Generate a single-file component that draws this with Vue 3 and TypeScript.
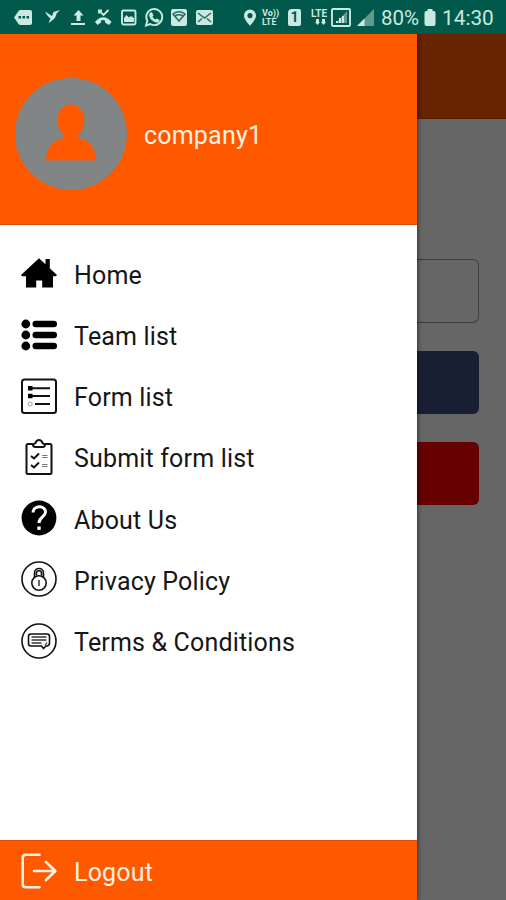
<script setup lang="ts">
type IconName = 'home' | 'team' | 'form' | 'submit' | 'about' | 'privacy' | 'terms'

interface MenuItem {
  icon: IconName
  label: string
}

const items: MenuItem[] = [
  { icon: 'home', label: 'Home' },
  { icon: 'team', label: 'Team list' },
  { icon: 'form', label: 'Form list' },
  { icon: 'submit', label: 'Submit form list' },
  { icon: 'about', label: 'About Us' },
  { icon: 'privacy', label: 'Privacy Policy' },
  { icon: 'terms', label: 'Terms & Conditions' },
]
</script>

<template>
  <div class="screen">
    <header class="status">
      <div class="notifications">
        <svg viewBox="10 0 26 34"><path class="fill" d="M14 17.5l4.500-6.500q.7-1 2-1H30q2 0 2 2v11q0 2-2 2h-9.500q-1.300 0-2-1z" /><path class="dark" d="M18.500 16h2.500v2.500h-2.500zM22.500 16h2.500v2.500h-2.500zM26.500 16h2.500v2.500h-2.500z" /></svg>
        <svg viewBox="36 0 26 34"><path class="fill" d="M45 11.500l7 4.500 1.500-4 6.500-2-3.500 3.500c-.5 4-3 6.500-8 9.500l2-4.500c-2-1.500-4-3.500-5.500-7z" /></svg>
        <svg viewBox="62 0 26 34"><path class="fill" d="M78.500 10l5 5.500h-3V21h-4v-5.500h-3zM71 23h14v2H71z" /></svg>
        <svg viewBox="88 0 26 34"><path class="line" d="M99 10.500l4.500 4.500 5-5" /><path class="line" d="M99 13.500v-3h3" /><path class="fill" d="M95 22c4.500-6.500 12-6.500 16.500 0l-2.500 3-4-2.500v-2q-2-.8-4 0v2L97.500 25z" /></svg>
        <svg viewBox="114 0 26 34"><rect class="line" x="122" y="10.500" width="13.500" height="14" rx="1.500" /><path class="fill" d="M124 22v-4l2.500-3 2.500 2.500 2-1.500 3 2v4z" /></svg>
        <svg viewBox="140 0 26 34"><path class="line" d="M146 25.500l1.300-4.500a8 8 0 1 1 3 3z" /><path class="fill" d="M150.300 12.500l1.700-.2 1.500 3-1 1.500q1 2 3 2.800l1.300-1.200 2.700 1.500q.2 2.300-2.500 2.600c-4.500-.3-8.500-5-7.800-8.500z" /></svg>
        <svg viewBox="166 0 26 34"><rect class="fill" x="171" y="9" width="16" height="17" rx="2" /><path class="darkline" d="M173 14q6-4.500 12 0l-6 7zM175 16q4-2.500 8 0" /></svg>
        <svg viewBox="192 0 26 34"><rect class="fill" x="196" y="10" width="17" height="15" rx="2" /><path class="darkline" d="M198 13l6.500 5 6.500-5M198 22l4-3.500M211 22l-4-3.500" /></svg>
      </div>
      <div class="system">
        <svg class="pin" viewBox="240 0 20 34"><path class="fill" fill-rule="evenodd" d="M250 9.500a6 6 0 0 1 6 6c0 4-4 7.500-6 10.500-2-3-6-6.500-6-10.500a6 6 0 0 1 6-6zm0 3.500a2.600 2.600 0 1 0 .01 0z" /></svg>
        <span class="volte"><span>Vo))</span><span>LTE</span></span>
        <span class="sim">1</span>
        <span class="lte"><span>LTE</span><svg viewBox="0 0 18 7"><path class="fill" d="M5 0h3v3H9L6.500 6 4 3h1zM11 0h3v3h1l-2.500 3L10 3h1z" /></svg></span>
        <svg class="boxed" viewBox="330 0 22 34"><rect class="line" x="332" y="9" width="18" height="17" rx="1" /><path class="faint" d="M336 23L347 11V23z" /><path class="fill" d="M336 23v-2h2v2zM339 23v-5h2v5zM342 23v-7h2v7z" /></svg>
        <svg class="signal" viewBox="354 0 23 34"><path class="faint" d="M357 26L374 9V26z" /><path class="fill" d="M357 26l7.500-7.500V26z" /></svg>
        <span class="percent">80%</span>
        <svg class="battery" viewBox="422 0 16 34"><path class="fill" d="M424.500 13q0-2 2-2h1V9h5v2h1.500q1.500 0 1.500 2v11q0 2-1.500 2h-7.500q-2 0-2-2z" /></svg>
        <time class="clock">14:30</time>
      </div>
    </header>

    <div class="body">
      <aside class="drawer">
        <div class="profile">
          <svg class="avatar" viewBox="0 0 112 112"><circle cx="56" cy="56" r="56" fill="#818585" /><path fill="#ff5900" d="M56 26.500c8 0 13.500 6.500 13.500 15.500 0 6.500-2.500 11.500-6 14.500v3.500c10 3 16.500 6.500 17.500 22.500H31c1-16 7.500-19.500 17.500-22.500v-3.500c-3.500-3-6-8-6-14.500 0-9 5.500-15.500 13.500-15.500z" /></svg>
          <span class="name">company1</span>
        </div>

        <nav class="menu">
          <a v-for="item in items" :key="item.icon" class="row">
            <svg v-if="item.icon === 'home'" class="icon" viewBox="0 0 36 36"><path d="M18 3.300l6.500 6V4h4.300v9.300L36 20l-1.200 1.200H32V32.500H21.200v-7h-6v7H5V21.200H1.200L0 20z" /></svg>
            <svg v-else-if="item.icon === 'team'" class="icon" viewBox="0 0 36 36"><circle cx="4.800" cy="7" r="4.400" /><circle cx="4.800" cy="18" r="4.400" /><circle cx="4.800" cy="29" r="4.400" /><rect x="11.500" y="3.700" width="24.500" height="6.600" rx="3.300" /><rect x="11.500" y="14.700" width="24.500" height="6.600" rx="3.300" /><rect x="11.500" y="25.700" width="24.500" height="6.600" rx="3.300" /></svg>
            <svg v-else-if="item.icon === 'form'" class="icon" viewBox="0 0 36 36"><rect class="ink" x="1" y="1.500" width="34" height="33.500" rx="2.500" /><path d="M7 8h4.500v4.500H7zM7 15.700h4.500v4.500H7z" /><circle cx="9.200" cy="26" r="2" fill="none" stroke="#999" /><path class="ink" d="M11 10.300h18M11 18h18M14 26h15" /></svg>
            <svg v-else-if="item.icon === 'submit'" class="icon" viewBox="0 0 36 36"><path class="ink" d="M12 5H7Q5.500 5 5.500 6.500v27q0 1.500 1.500 1.500h22q1.500 0 1.500-1.500v-27Q30.500 5 29 5h-5" /><path class="ink" d="M12 5.500l2.500-1.500q1-3 3.500-3t3.500 3L24 5.500q0 2.500-2.500 2.500h-7Q12 8 12 5.500z" /><path class="ink" d="M10 17l3 2.500 5-5M10 26l3 2.500 5-5" /><path fill="none" stroke="#777" stroke-width="1.200" d="M21 16.500h5.500M21 18.500h5.500M21 25.500h5.500M21 27.500h5.500" /></svg>
            <svg v-else-if="item.icon === 'about'" class="icon" viewBox="0 0 36 36"><circle cx="18" cy="18" r="17.400" /><path fill="none" stroke="#fff" stroke-width="3" d="M12 12.500c.5-7.500 12.500-7.500 12.500-.5 0 5-6.500 5-6.500 11" /><rect x="16.300" y="26.500" width="3.400" height="3.400" fill="#fff" /></svg>
            <svg v-else-if="item.icon === 'privacy'" class="icon" viewBox="0 0 36 36"><circle class="thin" cx="18" cy="18" r="17" /><circle class="thin" cx="18" cy="22" r="7.200" /><path class="thin" d="M13.500 16v-4c0-6 9-6 9 0v4M15.500 14.500V12c0-3 5-3 5 0v2.500" /><path stroke="#555" stroke-width="1.800" d="M18 19v6" /></svg>
            <svg v-else class="icon" viewBox="0 0 36 36"><circle class="thin" cx="18" cy="18" r="17" /><path class="thin" d="M10 11h16q2.500 0 2.500 2.500V20q0 2.500-2.500 3h-1l-2.500 2.500-2-2.500H10q-2.500 0-2.500-2.500v-7Q7.500 11 10 11z" /><path fill="none" stroke="#333" stroke-width="1.300" d="M10.500 14h15M10.500 17h15M10.500 20h10M24 22.500l2-3" /></svg>
            <span class="label">{{ item.label }}</span>
          </a>
        </nav>

        <a class="logout">
          <svg class="icon" viewBox="0 0 36 36"><path fill="none" stroke="#fff3e4" stroke-width="2.600" stroke-linecap="round" stroke-linejoin="round" d="M18.500 1.700H5Q1.700 1.700 1.700 5v26q0 3.300 3.300 3.300h13.500M13 18h21M25 9l9.300 9L25 27" /></svg>
          <span class="label">Logout</span>
        </a>
      </aside>

      <main class="page">
        <div class="appbar"></div>
        <div class="controls">
          <div class="field"></div>
          <div class="button blue"></div>
          <div class="button red"></div>
        </div>
      </main>
    </div>
  </div>
</template>

<style>
body {
  margin: 0;
}
</style>

<style scoped>
.screen {
  width: 506px;
  height: 900px;
  display: flex;
  flex-direction: column;
  overflow: hidden;
  font-family: Roboto, sans-serif;
}
.status {
  height: 34px;
  flex: none;
  display: flex;
  justify-content: space-between;
  background: #00594b;
  color: #c9e9e1;
}
.notifications {
  display: flex;
  padding-left: 10px;
}
.notifications svg {
  width: 26px;
  height: 34px;
}
.fill {
  fill: #c9e9e1;
}
.faint {
  fill: #5f9c90;
}
.line {
  fill: none;
  stroke: #c9e9e1;
  stroke-width: 1.9;
}
.dark {
  fill: #00594b;
}
.darkline {
  fill: none;
  stroke: #26705f;
  stroke-width: 1.5;
}
.system {
  width: 266px;
  display: flex;
  align-items: center;
}
.system > svg {
  height: 34px;
  flex: none;
}
.pin {
  width: 20px;
}
.volte,
.lte {
  flex: none;
  display: flex;
  flex-direction: column;
  font-weight: 700;
}
.volte {
  width: 28px;
  padding: 2px 0 0 2px;
  box-sizing: border-box;
  font-size: 9px;
  line-height: 9px;
}
.sim {
  flex: none;
  width: 13px;
  height: 17px;
  margin: 1px 10px 0 0;
  border-radius: 4px 2px 2px 2px;
  background: #c9e9e1;
  color: #00594b;
  font-size: 14px;
  font-weight: 700;
  line-height: 17px;
  text-align: center;
}
.lte {
  width: 19px;
  font-size: 10px;
  line-height: 11px;
}
.lte svg {
  width: 18px;
  height: 7px;
}
.boxed {
  width: 22px;
}
.signal {
  width: 23px;
  margin-left: 2px;
}
.percent {
  flex: none;
  width: 41px;
  margin: 2px 0 0 4px;
  font-size: 20.5px;
}
.battery {
  width: 16px;
}
.clock {
  margin: 2px 0 0 4px;
  font-size: 20.8px;
}
.body {
  flex: 1;
  display: flex;
  min-height: 0;
}
.drawer {
  position: relative;
  width: 417px;
  flex: none;
  display: flex;
  flex-direction: column;
  background: #fff;
  box-shadow: 0 0 5px rgba(0, 0, 0, 0.7);
  clip-path: inset(0 -8px 0 0);
}
.profile {
  height: 191px;
  box-sizing: border-box;
  padding: 0 0 0 15px;
  display: flex;
  gap: 17px;
  background: #ff5900;
  border-bottom: 1px solid #d94e08;
}
.avatar {
  width: 112px;
  height: 112px;
  margin-top: 44px;
}
.name {
  margin-top: 87px;
  color: #fff0e0;
  font-size: 25px;
  line-height: 30px;
  letter-spacing: 0.2px;
}
.menu {
  flex: 1;
  padding-top: 17.8px;
}
.row {
  height: 61.2px;
  padding-left: 21px;
  display: flex;
  align-items: center;
  gap: 17px;
}
.icon {
  width: 36px;
  height: 36px;
  flex: none;
}
.label {
  padding-top: 5px;
  color: #161616;
  font-size: 25px;
  line-height: 30px;
  letter-spacing: 0.17px;
}
.ink {
  fill: none;
  stroke: #111;
  stroke-width: 2;
}
.thin {
  fill: none;
  stroke: #111;
  stroke-width: 1.6;
}
.logout {
  height: 60px;
  box-sizing: border-box;
  padding-left: 21px;
  display: flex;
  align-items: center;
  gap: 17px;
  background: #ff5900;
  border-top: 1px solid #d94e08;
}
.logout .label {
  padding-top: 4px;
  color: #fff0e0;
}
.page {
  flex: 1;
  background: #666;
}
.appbar {
  height: 85px;
  box-sizing: border-box;
  background: #662400;
  border-bottom: 1px solid #5c1800;
}
.controls {
  padding: 140px 27.5px 0 0;
  display: flex;
  flex-direction: column;
  gap: 28px;
}
.field {
  height: 64px;
  box-sizing: border-box;
  border: 1px solid #3d3d3d;
  border-left: 0;
  border-radius: 0 6px 6px 0;
}
.button {
  height: 63px;
  border-radius: 0 6px 6px 0;
}
.blue {
  background: #181f33;
}
.red {
  background: #660000;
}
</style>
